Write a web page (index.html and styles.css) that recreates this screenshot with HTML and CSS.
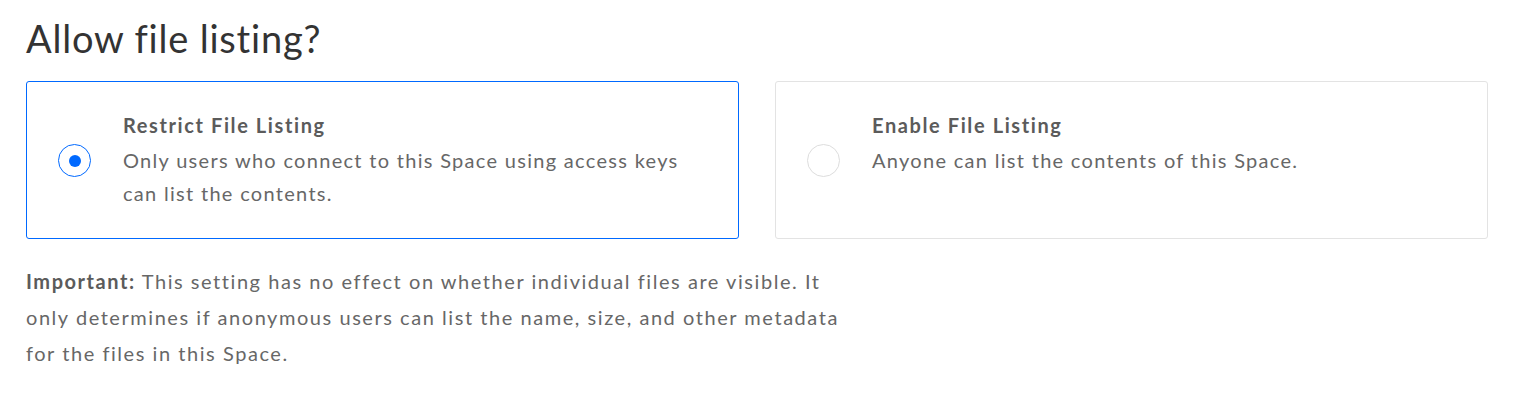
FILE: index.html
```html
<!DOCTYPE html>
<html>
<head>
<meta charset="utf-8">
<link rel="stylesheet" href="styles.css">
</head>
<body>
<div class="page">
  <h1 class="title">Allow file listing?</h1>
  <div class="options">
    <label class="option selected">
      <span class="radio"><span class="dot"></span></span>
      <span class="text">
        <span class="opt-title">Restrict File Listing</span>
        <span class="opt-desc">Only users who connect to this Space using access keys can list the contents.</span>
      </span>
    </label>
    <label class="option">
      <span class="radio"></span>
      <span class="text">
        <span class="opt-title">Enable File Listing</span>
        <span class="opt-desc">Anyone can list the contents of this Space.</span>
      </span>
    </label>
  </div>
  <p class="note"><strong>Important:</strong> This setting has no effect on whether individual files are visible. It only determines if anonymous users can list the name, size, and other metadata for the files in this Space.</p>
</div>
</body>
</html>
```
FILE: styles.css
```css
html, body { margin: 0; padding: 0; background: #fff; }
body { font-family: "Lato", "Liberation Sans", sans-serif; color: #676767; }
.page { padding: 14px 36px 0 26px; }
.title { margin: 0; font-size: 38px; font-weight: 400; color: #333; line-height: 48px; letter-spacing: 0.8px; }
.options { display: grid; grid-template-columns: 713px 713px; column-gap: 36px; margin-top: 19px; }
.option { display: flex; align-items: flex-start; height: 158px; box-sizing: border-box; border: 1px solid #e3e3e3; border-radius: 3px; padding: 29px 20px 0 31px; }
.option.selected { border-color: #0069ff; }
.radio { width: 33px; height: 33px; box-sizing: border-box; border: 1px solid #dddddd; border-radius: 50%; display: flex; align-items: center; justify-content: center; flex: none; margin: 33px 32px 0 0; }
.selected .radio { border-color: #0069ff; }
.dot { width: 12px; height: 12px; border-radius: 50%; background: #0069ff; }
.text { display: flex; flex-direction: column; }
.opt-title { font-size: 20px; font-weight: 700; color: #5b5b5b; line-height: 28px; margin-bottom: 5px; letter-spacing: 1.6px; }
.opt-desc { font-size: 20px; line-height: 33px; max-width: 575px; letter-spacing: 1.3px; }
.note { margin: 24px 0 0; font-size: 20px; line-height: 36px; max-width: 838px; letter-spacing: 1.55px; }
.note strong { font-weight: 700; color: #5b5b5b; }
```
